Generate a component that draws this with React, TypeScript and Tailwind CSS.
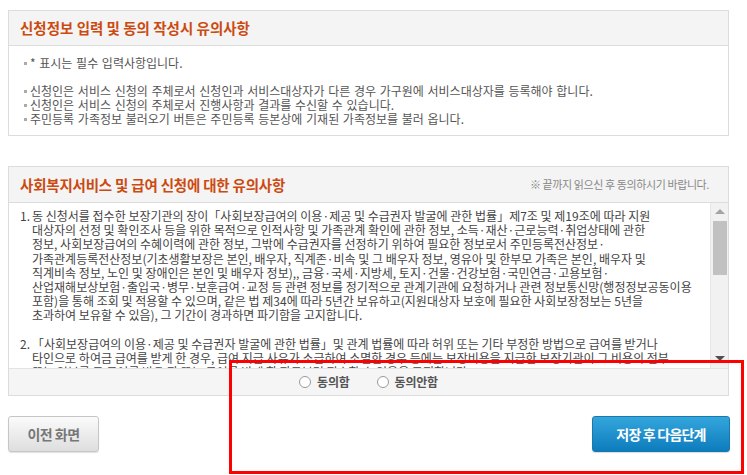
import React from 'react';

const noticeLines = [
  '신청인은 서비스 신청의 주체로서 신청인과 서비스대상자가 다른 경우 가구원에 서비스대상자를 등록해야 합니다.',
  '신청인은 서비스 신청의 주체로서 진행사항과 결과를 수신할 수 있습니다.',
  '주민등록 가족정보 불러오기 버튼은 주민등록 등본상에 기재된 가족정보를 불러 옵니다.',
];

const item1 = [
  '동 신청서를 접수한 보장기관의 장이「사회보장급여의 이용·제공 및 수급권자 발굴에 관한 법률」제7조 및 제19조에 따라 지원',
  '대상자의 선정 및 확인조사 등을 위한 목적으로 인적사항 및 가족관계 확인에 관한 정보, 소득·재산·근로능력·취업상태에 관한',
  '정보, 사회보장급여의 수혜이력에 관한 정보, 그밖에 수급권자를 선정하기 위하여 필요한 정보로서 주민등록전산정보·',
  '가족관계등록전산정보(기초생활보장은 본인, 배우자, 직계존·비속 및 그 배우자 정보, 영유아 및 한부모 가족은 본인, 배우자 및',
  '직계비속 정보, 노인 및 장애인은 본인 및 배우자 정보),, 금융·국세·지방세, 토지·건물·건강보험·국민연금·고용보험·',
  '산업재해보상보험·출입국·병무·보훈급여·교정 등 관련 정보를 정기적으로 관계기관에 요청하거나 관련 정보통신망(행정정보공동이용',
  '포함)을 통해 조회 및 적용할 수 있으며, 같은 법 제34에 따라 5년간 보유하고(지원대상자 보호에 필요한 사회보장정보는 5년을',
  '초과하여 보유할 수 있음), 그 기간이 경과하면 파기함을 고지합니다.',
];

const item2 = [
  '「사회보장급여의 이용·제공 및 수급권자 발굴에 관한 법률」및 관계 법률에 따라 허위 또는 기타 부정한 방법으로 급여를 받거나',
  '타인으로 하여금 급여를 받게 한 경우, 급여 지급 사유가 소급하여 소멸한 경우 등에는 보장비용을 지급한 보장기관이 그 비용의 전부',
  '또는 일부를 그 급여를 받은 자 또는 급여를 받게 한 자로부터 징수할 수 있음을 고지합니다.',
];

const NumberedItem: React.FC<{ num: string; lines: string[] }> = ({ num, lines }) => (
  <div className="flex">
    <span className="w-[12px] shrink-0">{num}</span>
    <div>
      {lines.map((l, i) => (
        <div key={i} className="whitespace-nowrap">{l}</div>
      ))}
    </div>
  </div>
);

const Radio: React.FC<{ label: string }> = ({ label }) => (
  <label className="flex items-center gap-[6px]">
    <span className="w-[12px] h-[12px] rounded-full border border-[#9a9a9a] bg-white" />
    <span className="text-[12px] font-bold text-[#555] tracking-[-0.2px]">{label}</span>
  </label>
);

export default function App() {
  return (
    <div className="relative w-[747px] h-[475px] overflow-hidden bg-white font-['Noto_Sans_CJK_KR','Noto_Sans',sans-serif]">
      <div className="pt-[10px] pl-[8px]">
        {/* 신청정보 유의사항 */}
        <div className="w-[721px] border border-[#dcdcdc]">
          <div className="h-[35px] flex items-center px-[11px] bg-[#f4f4f4] border-b border-[#dcdcdc]">
            <h2 className="text-[14.5px] font-bold text-[#cc4a10]">신청정보 입력 및 동의 작성시 유의사항</h2>
          </div>
          <div className="pt-[10px] pb-[9px] pl-[15px] text-[12px] leading-[14px] text-[#555] [word-spacing:1px]">
            <div className="flex items-center">
              <span className="w-[3px] h-[3px] bg-[#aaa] mr-[3px]" />
              <span>* 표시는 필수 입력사항입니다.</span>
            </div>
            <div className="h-[14px]" />
            {noticeLines.map((t, i) => (
              <div key={i} className="flex items-center whitespace-nowrap">
                <span className="w-[3px] h-[3px] bg-[#aaa] mr-[3px]" />
                <span>{t}</span>
              </div>
            ))}
          </div>
        </div>

        {/* 사회복지서비스 유의사항 */}
        <div className="mt-[30px] w-[721px] border border-[#dcdcdc]">
          <div className="h-[36px] flex items-center justify-between pl-[11px] pr-[19px] bg-[#f4f4f4] border-b border-[#dcdcdc]">
            <h2 className="text-[14.5px] font-bold text-[#cc4a10] tracking-[-0.2px]">사회복지서비스 및 급여 신청에 대한 유의사항</h2>
            <span className="text-[11px] text-[#888] tracking-[-0.4px]">※ 끝까지 읽으신 후 동의하시기 바랍니다.</span>
          </div>
          <div className="h-[165px] flex">
            <div className="flex-1 overflow-hidden pt-[6px] pl-[11px] text-[12px] leading-[14.2px] text-[#444]">
              <NumberedItem num="1." lines={item1} />
              <div className="h-[14.2px]" />
              <NumberedItem num="2." lines={item2} />
            </div>
            <div className="w-[18px] flex flex-col items-center bg-[#f1f1f1] border-l border-[#e6e6e6] pt-[6px] pb-[7px]">
              <span className="w-0 h-0 border-x-[5px] border-x-transparent border-b-[5px] border-b-[#a3a3a3]" />
              <span className="mt-[7px] w-[14px] h-[54px] bg-[#c1c1c1]" />
              <span className="flex-1" />
              <span className="w-0 h-0 border-x-[5px] border-x-transparent border-t-[5px] border-t-[#505050]" />
            </div>
          </div>
          <div className="h-[27px] flex items-center justify-center gap-[27px] bg-[#f5f5f5] border-t border-[#e3e3e3]">
            <Radio label="동의함" />
            <Radio label="동의안함" />
          </div>
        </div>

        {/* 버튼 */}
        <div className="mt-[20px] w-[722px] flex justify-between">
          <button className="h-[36px] w-[91px] rounded-[3px] border border-[#c6c6c6] bg-gradient-to-b from-[#fbfbfb] to-[#dedede] text-[14px] font-bold text-[#777] tracking-[-0.5px] shadow-[0_1px_1px_rgba(0,0,0,0.12)]">
            이전 화면
          </button>
          <button className="h-[36px] w-[138px] rounded-[3px] border border-[#1a78ad] bg-gradient-to-b from-[#33a6dc] to-[#0a7cbd] text-[14px] font-bold text-white tracking-[-0.8px] shadow-[0_1px_1px_rgba(0,0,0,0.15)]">
            저장 후 다음단계
          </button>
        </div>
      </div>

      {/* 강조 표시 */}
      <div className="absolute left-[229px] top-[360px] w-[515px] h-[114px] border-[3px] border-[#ff0000]" />
    </div>
  );
}
